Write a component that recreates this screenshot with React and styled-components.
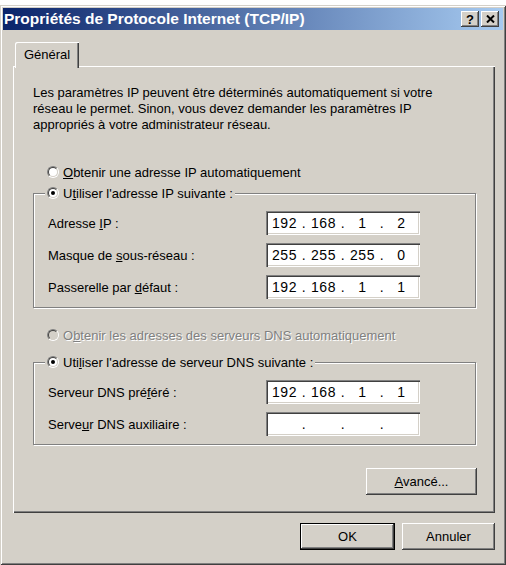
import React from "react";
import styled, { createGlobalStyle } from "styled-components";

const GlobalStyle = createGlobalStyle`
  html, body {
    margin: 0;
    padding: 0;
    background: #fff;
  }
  body {
    font-family: "Liberation Sans", Arial, sans-serif;
    font-size: 13px;
    color: #000;
  }
`;

// WINDOW FRAME
const Window = styled.div`
  box-sizing: border-box;
  width: 506px;
  height: 560px;
  margin-top: 5px;
  padding: 3px;
  background: #d4d0c8;
  display: flex;
  flex-direction: column;
  box-shadow: inset 1px 1px #d4d0c8, inset -1px -1px #404040,
    inset 2px 2px #fff, inset -2px -2px #808080;
`;

// TITLE BAR
const TitleBar = styled.div`
  height: 22px;
  display: flex;
  align-items: center;
  padding: 0 4px 0 1px;
  background: linear-gradient(to right, #0a246a, #a6caf0);
  color: #fff;
  font-family: "Liberation Sans", Arial, sans-serif;
  font-weight: 700;
  font-size: 15.5px;
  white-space: nowrap;
`;

const TitleButtons = styled.div`
  margin-left: auto;
  display: flex;
  gap: 2px;
`;

const TitleButton = styled.div`
  box-sizing: border-box;
  width: 18px;
  height: 16px;
  background: #d4d0c8;
  color: #000;
  display: flex;
  align-items: center;
  justify-content: center;
  font-size: 13px;
  font-weight: 700;
  box-shadow: inset -1px -1px #404040, inset 1px 1px #fff,
    inset -2px -2px #808080;
`;

// BODY
const Body = styled.div`
  flex: 1;
  display: flex;
  flex-direction: column;
  padding: 12px 8px 0 10px;
`;

const TabStrip = styled.div`
  display: flex;
  padding-left: 2px;
`;

const Tab = styled.div`
  position: relative;
  z-index: 1;
  box-sizing: border-box;
  width: 64px;
  height: 26px;
  margin-bottom: -2px;
  padding-bottom: 2px;
  display: flex;
  align-items: center;
  justify-content: center;
  background: #d4d0c8;
  border-top-left-radius: 2px;
  box-shadow: inset 1px 1px #fff, inset -1px 0 #404040, inset -2px 0 #808080;
`;

const Panel = styled.div`
  box-sizing: border-box;
  height: 447px;
  padding: 19px 19px 0 20px;
  display: flex;
  flex-direction: column;
  box-shadow: inset 1px 1px #fff, inset -1px -1px #404040,
    inset -2px -2px #808080;
`;

const Intro = styled.p`
  margin: 0;
  line-height: 16px;
  white-space: nowrap;
`;

// RADIO BUTTONS
const RadioRow = styled.div`
  display: flex;
  align-items: center;
  gap: 4px;
  height: 16px;
  white-space: nowrap;
  margin: ${(p) => p.$margin || "0"};
  color: ${(p) => (p.$disabled ? "#808080" : "#000")};
  text-shadow: ${(p) => (p.$disabled ? "1px 1px 0 #fff" : "none")};
`;

const RadioOuter = styled.span`
  box-sizing: border-box;
  width: 12px;
  height: 12px;
  border-radius: 50%;
  border: 1px solid;
  border-color: #808080 #fff #fff #808080;
  display: flex;
`;

const RadioInner = styled.span`
  box-sizing: border-box;
  width: 10px;
  height: 10px;
  border-radius: 50%;
  border: 1px solid;
  border-color: #404040 #d4d0c8 #d4d0c8 #404040;
  background: ${(p) => (p.$disabled ? "#d4d0c8" : "#fff")};
  display: flex;
  align-items: center;
  justify-content: center;
`;

const RadioDot = styled.span`
  width: 4px;
  height: 4px;
  border-radius: 50%;
  background: #000;
`;

// GROUP BOX
const GroupBox = styled.fieldset`
  box-sizing: border-box;
  width: 443px;
  margin: ${(p) => p.$margin};
  padding: 0;
  border: 1px solid #808080;
  box-shadow: 1px 1px 0 #fff, inset 1px 1px 0 #fff;
  min-inline-size: 0;
`;

const Legend = styled.legend`
  margin-left: 11px;
  padding: 0 2px;
  background: #d4d0c8;
`;

const FieldGrid = styled.div`
  display: grid;
  grid-template-columns: 218px 154px;
  row-gap: 8px;
  align-items: center;
  padding: 10px 0 8px 14px;
`;

const Label = styled.span`
  white-space: nowrap;
`;

const IpBox = styled.div`
  box-sizing: border-box;
  width: 154px;
  height: 24px;
  padding: 2px;
  background: #fff;
  display: grid;
  grid-template-columns: 1fr 6px 1fr 6px 1fr 6px 1fr;
  align-items: center;
  font-size: 14px;
  letter-spacing: 0.5px;
  box-shadow: inset 1px 1px #808080, inset 2px 2px #404040,
    inset -1px -1px #fff, inset -2px -2px #d4d0c8;
`;

const Segment = styled.span`
  text-align: center;
`;

const Dot = styled.span`
  text-align: center;
`;

// BUTTONS
const Button = styled.div`
  box-sizing: border-box;
  width: ${(p) => p.$width}px;
  height: 27px;
  display: flex;
  align-items: center;
  justify-content: center;
  background: #d4d0c8;
  box-shadow: ${(p) =>
    p.$default
      ? "inset 0 0 0 1px #000, inset -2px -2px #404040, inset 2px 2px #fff, inset -3px -3px #808080"
      : "inset -1px -1px #404040, inset 1px 1px #fff, inset -2px -2px #808080"};
`;

const AdvancedRow = styled.div`
  display: flex;
  justify-content: flex-end;
  width: 444px;
  margin-top: 23px;
`;

const Footer = styled.div`
  display: flex;
  justify-content: flex-end;
  gap: 7px;
  margin-top: 10px;
`;

const Radio = ({ checked, disabled, children, margin }) => (
  <RadioRow $disabled={disabled} $margin={margin}>
    <RadioOuter>
      <RadioInner $disabled={disabled}>{checked && <RadioDot />}</RadioInner>
    </RadioOuter>
    <span>{children}</span>
  </RadioRow>
);

const IpField = ({ value = ["", "", "", ""] }) => (
  <IpBox>
    {value.map((v, i) => (
      <React.Fragment key={i}>
        {i > 0 && <Dot>.</Dot>}
        <Segment>{v}</Segment>
      </React.Fragment>
    ))}
  </IpBox>
);

const CloseIcon = () => (
  <svg width="9" height="8" viewBox="0 0 9 8">
    <path d="M1 0.5 L8 7.5 M8 0.5 L1 7.5" stroke="#000" strokeWidth="2" />
  </svg>
);

export default function App() {
  return (
    <>
      <GlobalStyle />
      <Window>
        <TitleBar>
          Propriétés de Protocole Internet (TCP/IP)
          <TitleButtons>
            <TitleButton>?</TitleButton>
            <TitleButton>
              <CloseIcon />
            </TitleButton>
          </TitleButtons>
        </TitleBar>
        <Body>
          <TabStrip>
            <Tab>Général</Tab>
          </TabStrip>
          <Panel>
            <Intro>
              Les paramètres IP peuvent être déterminés automatiquement si votre
              <br />
              réseau le permet. Sinon, vous devez demander les paramètres IP
              <br />
              appropriés à votre administrateur réseau.
            </Intro>

            <Radio margin="31px 0 0 14px">
              <u>O</u>btenir une adresse IP automatiquement
            </Radio>

            <GroupBox $margin="5px 0 0 0">
              <Legend>
                <Radio checked>
                  U<u>t</u>iliser l'adresse IP suivante :
                </Radio>
              </Legend>
              <FieldGrid>
                <Label>
                  Adresse <u>I</u>P :
                </Label>
                <IpField value={["192", "168", "1", "2"]} />
                <Label>
                  Masque de <u>s</u>ous-réseau :
                </Label>
                <IpField value={["255", "255", "255", "0"]} />
                <Label>
                  Passerelle par <u>d</u>éfaut :
                </Label>
                <IpField value={["192", "168", "1", "1"]} />
              </FieldGrid>
            </GroupBox>

            <Radio disabled margin="19px 0 0 14px">
              O<u>b</u>tenir les adresses des serveurs DNS automatiquement
            </Radio>

            <GroupBox $margin="11px 0 0 0">
              <Legend>
                <Radio checked>
                  Uti<u>l</u>iser l'adresse de serveur DNS suivante :
                </Radio>
              </Legend>
              <FieldGrid>
                <Label>
                  Serveur DNS pré<u>f</u>éré :
                </Label>
                <IpField value={["192", "168", "1", "1"]} />
                <Label>
                  Serve<u>u</u>r DNS auxiliaire :
                </Label>
                <IpField />
              </FieldGrid>
            </GroupBox>

            <AdvancedRow>
              <Button $width={111}>
                <span>
                  <u>A</u>vancé...
                </span>
              </Button>
            </AdvancedRow>
          </Panel>
          <Footer>
            <Button $width={95} $default>
              OK
            </Button>
            <Button $width={93}>Annuler</Button>
          </Footer>
        </Body>
      </Window>
    </>
  );
}
